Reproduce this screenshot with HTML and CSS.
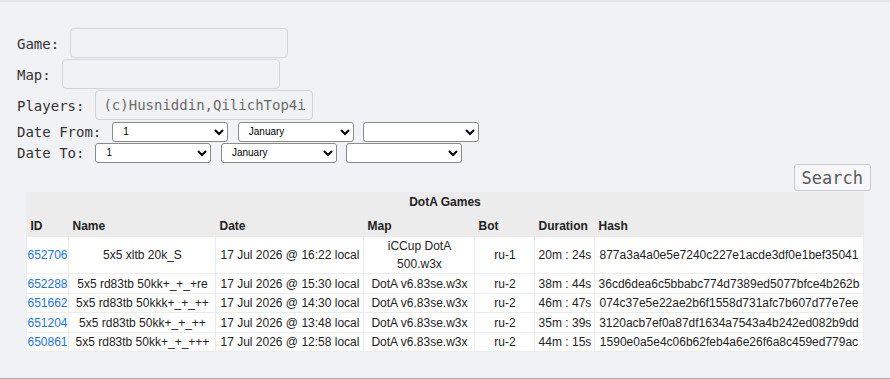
FILE: index.html
```
<!DOCTYPE html>
<html lang="en">
<head>
    <meta charset="UTF-8">
    <meta name="viewport" content="width=device-width, initial-scale=1.0">
    <title>DotA Games</title>
    <link rel="stylesheet" href="styles.css">
</head>
<body>
<div class="page">

    <!-- Search form -->
    <form class="search" onsubmit="return false">
        <div class="field">
            <label for="game">Game:</label>
            <input type="text" id="game" class="text-input">
        </div>
        <div class="field">
            <label for="map">Map:</label>
            <input type="text" id="map" class="text-input">
        </div>
        <div class="field">
            <label for="players">Players:</label>
            <input type="text" id="players" class="text-input" value="(c)Husniddin,QilichTop4i">
        </div>
        <div class="field date-row">
            <label>Date From:</label>
            <select class="date-select"><option>1</option><option>2</option><option>3</option></select>
            <select class="date-select"><option>January</option><option>February</option><option>March</option></select>
            <select class="date-select"><option></option><option>2026</option></select>
        </div>
        <div class="field date-row">
            <label>Date To:</label>
            <select class="date-select"><option>1</option><option>2</option><option>3</option></select>
            <select class="date-select"><option>January</option><option>February</option><option>March</option></select>
            <select class="date-select"><option></option><option>2026</option></select>
        </div>
        <div class="actions">
            <button class="search-button" type="submit">Search</button>
        </div>
    </form>

    <!-- Results -->
    <table class="games">
        <colgroup>
            <col class="col-id">
            <col class="col-name">
            <col class="col-date">
            <col class="col-map">
            <col class="col-bot">
            <col class="col-duration">
            <col class="col-hash">
        </colgroup>
        <thead>
            <tr><th colspan="7" class="table-title">DotA Games</th></tr>
            <tr class="head-row">
                <th>ID</th>
                <th>Name</th>
                <th>Date</th>
                <th>Map</th>
                <th>Bot</th>
                <th>Duration</th>
                <th>Hash</th>
            </tr>
        </thead>
        <tbody>
            <tr>
                <td class="id"><a href="#">652706</a></td>
                <td>5x5 xltb 20k_S</td>
                <td>17 Jul 2026 @ 16:22 local</td>
                <td>iCCup DotA 500.w3x</td>
                <td>ru-1</td>
                <td>20m : 24s</td>
                <td>877a3a4a0e5e7240c227e1acde3df0e1bef35041</td>
            </tr>
            <tr>
                <td class="id"><a href="#">652288</a></td>
                <td>5x5 rd83tb 50kk+_+_+re</td>
                <td>17 Jul 2026 @ 15:30 local</td>
                <td>DotA v6.83se.w3x</td>
                <td>ru-2</td>
                <td>38m : 44s</td>
                <td>36cd6dea6c5bbabc774d7389ed5077bfce4b262b</td>
            </tr>
            <tr>
                <td class="id"><a href="#">651662</a></td>
                <td>5x5 rd83tb 50kkk+_+_++</td>
                <td>17 Jul 2026 @ 14:30 local</td>
                <td>DotA v6.83se.w3x</td>
                <td>ru-2</td>
                <td>46m : 47s</td>
                <td>074c37e5e22ae2b6f1558d731afc7b607d77e7ee</td>
            </tr>
            <tr>
                <td class="id"><a href="#">651204</a></td>
                <td>5x5 rd83tb 50kk+_+_++</td>
                <td>17 Jul 2026 @ 13:48 local</td>
                <td>DotA v6.83se.w3x</td>
                <td>ru-2</td>
                <td>35m : 39s</td>
                <td>3120acb7ef0a87df1634a7543a4b242ed082b9dd</td>
            </tr>
            <tr>
                <td class="id"><a href="#">650861</a></td>
                <td>5x5 rd83tb 50kk+_+_+++</td>
                <td>17 Jul 2026 @ 12:58 local</td>
                <td>DotA v6.83se.w3x</td>
                <td>ru-2</td>
                <td>44m : 15s</td>
                <td>1590e0a5e4c06b62feb4a6e26f6a8c459ed779ac</td>
            </tr>
        </tbody>
    </table>

</div>
</body>
</html>
```

FILE: styles.css
```
html, body {
    margin: 0;
    background-color: #f1f2f6;
}

.page {
    box-sizing: border-box;
    height: 379px;
    border-top: 2px solid #e2e4e9;
    border-bottom: 1px solid #a9a9ab;
    padding-top: 26px;
    font-family: "DejaVu Sans Mono", monospace;
    font-size: 14px;
    color: #333;
}

.search {
    padding: 0 19px 0 17px;
}

.field {
    display: flex;
    align-items: center;
    gap: 10px;
}

.field label {
    white-space: pre;
    margin-right: 1px;
}

.text-input {
    box-sizing: border-box;
    width: 218px;
    height: 30px;
    margin: 0 0 1px 0;
    padding: 0 7px;
    border: 1px solid #d4d5da;
    border-radius: 4px;
    background: transparent;
    font-family: "DejaVu Sans Mono", monospace;
    font-size: 14px;
    color: #6b6b6b;
}

.date-row {
    height: 21px;
    gap: 10px;
}

.date-row .date-select + .date-select {
    margin-left: -0.5px;
}

.date-select {
    box-sizing: border-box;
    width: 116px;
    height: 20px;
    padding: 0 0 0 6px;
    border: 1px solid #8a8a8a;
    border-radius: 3px;
    background-color: #fff;
    font-family: "Liberation Sans", Arial, sans-serif;
    font-size: 10px;
    color: #000;
}

.actions {
    display: flex;
    justify-content: flex-end;
    padding-top: 1px;
}

.search-button {
    box-sizing: border-box;
    height: 27px;
    padding: 0 7px;
    border: 1px solid #c9cacd;
    border-radius: 3px;
    background-color: #f7f7f9;
    font-family: "DejaVu Sans Mono", monospace;
    font-size: 17px;
    color: #5a5a5a;
    cursor: pointer;
}

.games {
    table-layout: fixed;
    width: 837px;
    margin: 1px auto 0;
    border-spacing: 1px;
    background-color: #ececec;
    font-family: "Liberation Sans", Arial, sans-serif;
    font-size: 12px;
    color: #222;
}

.col-id { width: 41px; }
.col-name { width: 146px; }
.col-date { width: 147px; }
.col-map { width: 110px; }
.col-bot { width: 59px; }
.col-duration { width: 59px; }
.col-hash { width: 267px; }

.games th {
    text-align: left;
    padding: 0 3px;
    font-weight: bold;
    line-height: 14px;
}

.games .table-title {
    text-align: center;
    height: 17px;
}

.head-row th {
    padding: 8px 3px 3px;
}

.games td {
    background-color: #fff;
    text-align: center;
    padding: 0 2px;
    line-height: 18px;
    height: 18px;
}

.games tbody tr + tr td {
    padding-top: 0.5px;
}

.games td.id {
    text-align: left;
    padding-left: 0;
    padding-right: 0;
}

.games a {
    color: #1a73e8;
    text-decoration: none;
}
```
